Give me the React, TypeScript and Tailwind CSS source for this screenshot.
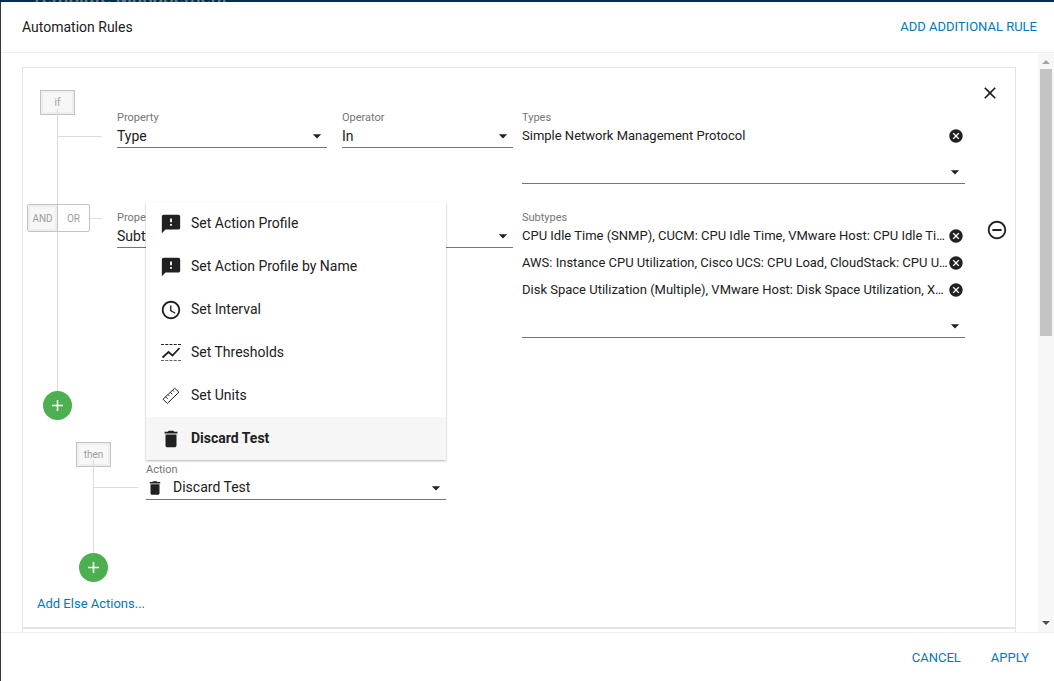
import React, { useState } from 'react';
import {
  MdAccessTime,
  MdAdd,
  MdArrowDropDown,
  MdCancel,
  MdClose,
  MdDelete,
  MdFeedback,
  MdRemoveCircleOutline,
} from 'react-icons/md';

const ThresholdsIcon: React.FC<{ className?: string }> = ({ className }) => (
  <svg viewBox="0 0 20 20" fill="none" stroke="currentColor" className={className}>
    <path d="M0 1.5h20" strokeWidth="1.2" strokeDasharray="3 1.25" />
    <path d="M0 17.5h20" strokeWidth="1.2" strokeDasharray="3 1.25" opacity="0.7" />
    <path d="M1.5 14.5L7.5 9l4 3.5L18.5 5" strokeWidth="1.8" />
  </svg>
);

const RulerIcon: React.FC<{ className?: string }> = ({ className }) => (
  <svg viewBox="0 0 20 20" fill="none" stroke="currentColor" strokeWidth="1" className={className}>
    <path d="M2 13.2L13.7 2.2l4.2 4L6.3 17.5z" strokeLinejoin="round" />
    <path d="M4.6 10.8l2 2M7 8.5l1.4 1.4M9.3 6.3l2 2M11.6 4.2L13 5.6" />
  </svg>
);

const actions = [
  { label: 'Set Action Profile', icon: <MdFeedback className="w-[22px] h-[22px]" /> },
  { label: 'Set Action Profile by Name', icon: <MdFeedback className="w-[22px] h-[22px]" /> },
  { label: 'Set Interval', icon: <MdAccessTime className="w-[22px] h-[22px]" /> },
  { label: 'Set Thresholds', icon: <ThresholdsIcon className="w-5 h-5" /> },
  { label: 'Set Units', icon: <RulerIcon className="w-5 h-5" /> },
  { label: 'Discard Test', icon: <MdDelete className="w-[22px] h-[22px]" /> },
];

const conditions = [
  {
    property: 'Type',
    operator: 'In',
    valuesLabel: 'Types',
    values: ['Simple Network Management Protocol'],
  },
  {
    property: 'Subtype',
    operator: 'In',
    valuesLabel: 'Subtypes',
    values: [
      'CPU Idle Time (SNMP), CUCM: CPU Idle Time, VMware Host: CPU Idle Time',
      'AWS: Instance CPU Utilization, Cisco UCS: CPU Load, CloudStack: CPU Utilization',
      'Disk Space Utilization (Multiple), VMware Host: Disk Space Utilization, XenServer: Disk Space',
    ],
  },
];

const Dropdown: React.FC<{ id: string; value?: string; ariaLabel?: string }> = ({ id, value = '', ariaLabel }) => (
  <div className="relative">
    <select
      id={id}
      aria-label={ariaLabel}
      defaultValue={value}
      className="block w-full h-[23px] appearance-none border-b border-[#757575] bg-transparent pr-5 text-sm outline-none"
    >
      <option value={value}>{value}</option>
    </select>
    <MdArrowDropDown className="pointer-events-none absolute right-0 top-px w-5 h-5" />
  </div>
);

const SelectField: React.FC<{ id: string; label: string; value: string }> = ({ id, label, value }) => (
  <div>
    <label htmlFor={id} className="block text-[11px] leading-[14px] text-[#757575]">
      {label}
    </label>
    <Dropdown id={id} value={value} />
  </div>
);

const StepBox: React.FC<{ children: React.ReactNode }> = ({ children }) => (
  <div className="flex h-[25px] w-[35px] items-center justify-center border border-[#c4c4c4] bg-[#f7f7f7] text-[10px] text-[#9e9e9e] shadow-[inset_0_0_0_2px_#eeeeee]">
    {children}
  </div>
);

const AddButton: React.FC<{ label: string }> = ({ label }) => (
  <button
    type="button"
    aria-label={label}
    className="flex h-[29px] w-[29px] items-center justify-center rounded-full bg-[#4caf50] text-white"
  >
    <MdAdd className="h-[19px] w-[19px]" />
  </button>
);

const ActionField: React.FC = () => {
  const [selected, setSelected] = useState('Discard Test');
  const [open, setOpen] = useState(true);

  return (
    <div className="relative w-[300px]">
      {open && (
        <ul
          role="listbox"
          aria-label="Action"
          className="absolute bottom-full left-0 mb-[3px] w-full bg-white shadow-[0_1px_2px_rgba(0,0,0,0.3)]"
        >
          {actions.map((action) => (
            <li key={action.label} role="option" aria-selected={action.label === selected}>
              <button
                type="button"
                onClick={() => {
                  setSelected(action.label);
                  setOpen(false);
                }}
                className={`flex h-[43px] w-full items-center gap-[9px] pl-[14px] text-sm ${
                  action.label === selected ? 'bg-[#f6f6f6] font-bold' : ''
                }`}
              >
                <span className="flex w-[22px] justify-center">{action.icon}</span>
                <span className="pb-[2px]">{action.label}</span>
              </button>
            </li>
          ))}
        </ul>
      )}
      <span id="action-label" className="block text-[11px] leading-[14px] text-[#757575]">
        Action
      </span>
      <button
        type="button"
        aria-labelledby="action-label"
        aria-haspopup="listbox"
        aria-expanded={open}
        onClick={() => setOpen(!open)}
        className="flex h-[23px] w-full items-center border-b border-[#757575] text-sm"
      >
        <MdDelete className="h-[18px] w-[18px]" />
        <span className="ml-[9px] flex-1 pb-[2px] text-left">{selected}</span>
        <MdArrowDropDown className="w-5 h-5" />
      </button>
    </div>
  );
};

const App: React.FC = () => {
  return (
    <div className="flex h-screen flex-col overflow-hidden bg-white font-['Roboto',sans-serif] text-[#212121]">
      {/* Page bar behind the dialog */}
      <div className="flex h-[2px] shrink-0 items-end overflow-hidden bg-[#00304d] pl-[31px]">
        <span className="text-[19px] leading-[9px] font-medium text-[#75787a]">Template Management</span>
      </div>

      <div className="flex min-h-0 flex-1 flex-col border-l border-[#37373b]">
        <header className="flex h-[51px] shrink-0 items-center justify-between border-b border-[#eeeeee] pl-[21px] pr-[17px]">
          <h1 className="text-sm">Automation Rules</h1>
          <button type="button" className="text-[13px] text-[#0277bd]">
            ADD ADDITIONAL RULE
          </button>
        </header>

        <div className="flex min-h-0 flex-1">
          <main className="min-w-0 flex-1 overflow-hidden pl-[21px] pr-[22px] pt-[14px]">
            <section className="border border-[#e4e4e4] pb-[13px] pt-[22px]">
              {/* Conditions */}
              {conditions.map((condition, index) => (
                <div key={condition.property} className={`flex ${index === 0 ? 'pb-[6px]' : ''}`}>
                  <div className="relative w-[94px] shrink-0">
                    {index === 0 ? (
                      <>
                        <div className="ml-[17px]">
                          <StepBox>if</StepBox>
                        </div>
                        <span className="absolute left-[34px] top-[19px] -bottom-[6px] w-px bg-[#dcdcdc]" />
                        <span className="absolute left-[34px] top-[46px] h-px w-[45px] bg-[#dcdcdc]" />
                      </>
                    ) : (
                      <>
                        <span className="absolute left-[34px] top-0 bottom-0 w-px bg-[#dcdcdc]" />
                        <span className="absolute left-[67px] top-7 h-px w-3 bg-[#dcdcdc]" />
                        <div className="relative ml-1 mt-[14px] flex h-7 w-[63px] rounded-[2px] border border-[#c4c4c4] bg-white text-[10px] text-[#9e9e9e]">
                          <button
                            type="button"
                            className="w-[30px] border-r border-[#c4c4c4] bg-[#f7f7f7] shadow-[inset_0_0_0_2px_#eeeeee]"
                          >
                            AND
                          </button>
                          <button type="button" className="flex-1">
                            OR
                          </button>
                        </div>
                      </>
                    )}
                  </div>

                  <div className={`grid min-w-0 flex-1 grid-cols-[225fr_180fr_443fr] pt-[21px] ${index === 1 ? 'pb-[53px]' : ''}`}>
                    <div className="pr-[15px]">
                      <SelectField id={`property-${index}`} label="Property" value={condition.property} />
                    </div>
                    <div className="pr-[9px]">
                      <SelectField id={`operator-${index}`} label="Operator" value={condition.operator} />
                    </div>
                    <div className="min-w-0">
                      <div className="text-[11px] leading-[14px] text-[#757575]">{condition.valuesLabel}</div>
                      <ul className="mb-[13px] flex flex-col gap-[5px]">
                        {condition.values.map((value) => (
                          <li key={value} className="flex h-[22px] items-center pr-px text-[13px]">
                            <span className="min-w-0 flex-1 truncate">{value}</span>
                            <button type="button" aria-label={`Remove ${value}`}>
                              <MdCancel className="h-4 w-4" />
                            </button>
                          </li>
                        ))}
                      </ul>
                      <div className="pt-px">
                        <Dropdown id={`values-${index}`} ariaLabel={condition.valuesLabel} />
                      </div>
                    </div>
                  </div>

                  <div className="w-[50px] shrink-0">
                    {index === 0 ? (
                      <button type="button" aria-label="Remove rule" className="-mt-[7px] ml-[15px] block">
                        <MdClose className="h-5 w-5" />
                      </button>
                    ) : (
                      <button type="button" aria-label="Remove condition" className="ml-[21px] mt-[29px] block">
                        <MdRemoveCircleOutline className="h-[22px] w-[22px]" />
                      </button>
                    )}
                  </div>
                </div>
              ))}
              <div className="ml-5">
                <AddButton label="Add condition" />
              </div>

              {/* Actions */}
              <div className="mt-[22px] flex h-[111px]">
                <div className="relative w-[123px] shrink-0 pl-[53px]">
                  <StepBox>then</StepBox>
                  <span className="absolute left-[70px] top-[18px] bottom-0 w-px bg-[#dcdcdc]" />
                  <span className="absolute left-[70px] top-[45px] h-px w-[45px] bg-[#dcdcdc]" />
                </div>
                <div className="pt-[21px]">
                  <ActionField />
                </div>
              </div>
              <div className="ml-14">
                <AddButton label="Add action" />
              </div>
              <button type="button" className="ml-[14px] mt-3 block text-[13px] leading-5 text-[#0277bd]">
                Add Else Actions...
              </button>
            </section>
            <section className="h-10 border border-[#e4e4e4]" />
          </main>

          {/* Scrollbar */}
          <div className="flex w-4 shrink-0 flex-col items-center bg-[#f7f7f7]">
            <span className="mt-[7px] border-x-4 border-b-4 border-x-transparent border-b-[#a3a3a3]" />
            <span className="mt-[5px] h-[267px] w-3 bg-[#c4c4c4]" />
            <span className="mb-[7px] mt-auto border-x-4 border-t-4 border-x-transparent border-t-[#505050]" />
          </div>
        </div>

        <footer className="flex h-[49px] shrink-0 items-center justify-end gap-[30px] border-t border-[#eeeeee] pr-[25px] pt-[2px] text-[13px] text-[#0277bd]">
          <button type="button">CANCEL</button>
          <button type="button">APPLY</button>
        </footer>
      </div>
    </div>
  );
};

export default App;
